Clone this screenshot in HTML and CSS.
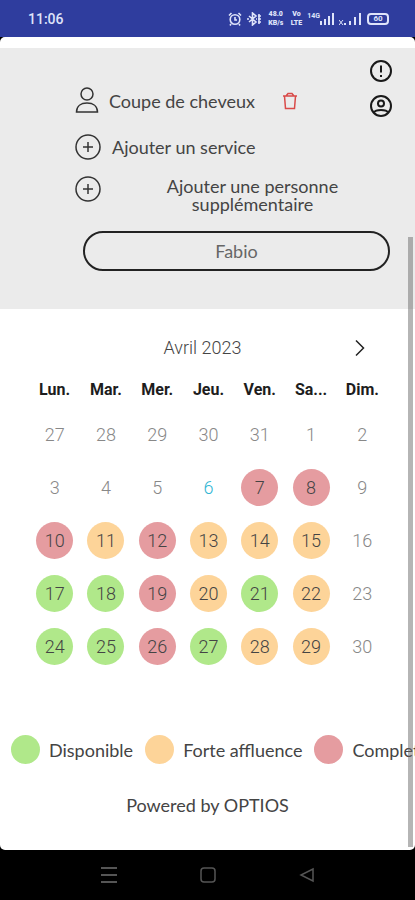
FILE: index.html
```html
<!DOCTYPE html>
<html lang="fr">
<head>
<meta charset="utf-8">
<meta name="viewport" content="width=device-width, initial-scale=1">
<title>Rendez-vous</title>
<link rel="stylesheet" href="styles.css">
</head>
<body>
<header class="status">
  <time class="clock">11:06</time>
  <div class="indicators">
    <svg width="14" height="14" viewBox="0 0 14 14" fill="none" stroke="currentColor" stroke-width="1.6"><circle cx="7" cy="7.5" r="4.8"/><path d="M7 5v3h2M1 3.5L3.5 1M10.500 1L13 3.500M3 12l-1 1.500M11 12l1 1.500"/></svg>
    <svg width="14" height="14" viewBox="0 0 14 14" fill="none" stroke="currentColor" stroke-width="1.600"><path d="M2 4l7 6-3.500 3V1L9 4l-7 6M0 7h2M9 7h1M12 2v10" /><path d="M11 4h3M11 7h3M11 10h3"/></svg>
    <span class="micro speed"><b>48.0</b><b>KB/s</b></span>
    <span class="micro"><b>Vo</b><b>LTE</b></span>
    <span class="signal"><b class="micro">14G</b><svg width="14" height="14" viewBox="0 0 14 14" fill="currentColor"><path d="M0 9h2v4H0zM4 7h2v6H4zM8 4h2v9H8zM12 1h2v12h-2z"/></svg></span>
    <svg width="23" height="14" viewBox="0 0 23 14" fill="currentColor"><path d="M5 11h2v2H5zM10 9h2v4h-2zM15 5h2v8h-2zM20 1h2v12h-2z"/><path d="M0 8l4 5M4 8l-4 5" stroke="currentColor"/></svg>
    <span class="battery">60</span>
  </div>
</header>
<main class="screen">
  <section class="booking">
    <div class="booking-top">
      <ul class="services">
        <li class="service">
          <svg class="person" width="24" height="26" viewBox="0 0 24 26" fill="none" stroke="currentColor" stroke-width="1.500"><circle cx="12" cy="7" r="6"/><path d="M1.500 25C1.500 19 6 16 12 16s10.500 3 10.500 9z"/></svg>
          <span>Coupe de cheveux</span>
          <button class="icon-btn delete" aria-label="Supprimer"><svg width="14" height="18" viewBox="0 0 14 18" fill="none" stroke="currentColor" stroke-width="1.500"><path d="M0 4h14M1.500 4l1 12.500h9l1-12.500M3 4L5 1.500h4L11 4"/></svg></button>
        </li>
        <li><button class="service add"><svg width="26" height="26" viewBox="0 0 26 26" fill="none" stroke="currentColor" stroke-width="1.500"><circle cx="13" cy="13" r="12"/><path d="M13 8v10M8 13h10"/></svg><span>Ajouter un service</span></button></li>
        <li><button class="service add guest"><svg width="26" height="26" viewBox="0 0 26 26" fill="none" stroke="currentColor" stroke-width="1.500"><circle cx="13" cy="13" r="12"/><path d="M13 8v10M8 13h10"/></svg><span>Ajouter une personne supplémentaire</span></button></li>
      </ul>
      <nav class="tools">
        <button class="icon-btn" aria-label="Informations"><svg width="22" height="22" viewBox="0 0 22 22" fill="none" stroke="currentColor" stroke-width="2"><circle cx="11" cy="11" r="10"/><path d="M11 5.500v7M11 15v2"/></svg></button>
        <button class="icon-btn" aria-label="Compte"><svg width="22" height="22" viewBox="0 0 22 22" fill="none" stroke="currentColor" stroke-width="2"><circle cx="11" cy="11" r="10"/><circle cx="11" cy="8.500" r="3"/><path d="M4 17.500c1-2 3-2.500 7-2.500s6 .5 7 2.500"/></svg></button>
      </nav>
    </div>
    <button class="staff">Fabio</button>
  </section>
  <section class="calendar">
    <div class="month">
      <h1>Avril 2023</h1>
      <button class="icon-btn next" aria-label="Mois suivant"><svg width="10" height="18" viewBox="0 0 10 18" fill="none" stroke="currentColor" stroke-width="1.500"><path d="M1 1.500L8.500 9L1 16.500"/></svg></button>
    </div>
    <table>
      <thead><tr><th>Lun.</th><th>Mar.</th><th>Mer.</th><th>Jeu.</th><th>Ven.</th><th>Sa...</th><th>Dim.</th></tr></thead>
      <tbody>
        <tr><td>27</td><td>28</td><td>29</td><td>30</td><td>31</td><td>1</td><td>2</td></tr>
        <tr><td>3</td><td>4</td><td>5</td><td class="today">6</td><td><button class="day full">7</button></td><td><button class="day full">8</button></td><td>9</td></tr>
        <tr><td><button class="day full">10</button></td><td><button class="day busy">11</button></td><td><button class="day full">12</button></td><td><button class="day busy">13</button></td><td><button class="day busy">14</button></td><td><button class="day busy">15</button></td><td>16</td></tr>
        <tr><td><button class="day free">17</button></td><td><button class="day free">18</button></td><td><button class="day full">19</button></td><td><button class="day busy">20</button></td><td><button class="day free">21</button></td><td><button class="day busy">22</button></td><td>23</td></tr>
        <tr><td><button class="day free">24</button></td><td><button class="day free">25</button></td><td><button class="day full">26</button></td><td><button class="day free">27</button></td><td><button class="day busy">28</button></td><td><button class="day busy">29</button></td><td>30</td></tr>
      </tbody>
    </table>
  </section>
  <ul class="legend">
    <li><i class="dot free"></i>Disponible</li>
    <li><i class="dot busy"></i>Forte affluence</li>
    <li><i class="dot full"></i>Complet</li>
  </ul>
  <p class="powered">Powered by OPTIOS</p>
  <div class="scrollbar"></div>
</main>
<nav class="system">
  <button class="icon-btn" aria-label="Menu"><svg width="16" height="18" viewBox="0 0 16 18" stroke="currentColor" stroke-width="2"><path d="M0 2h16M0 9h16M0 16h16"/></svg></button>
  <button class="icon-btn" aria-label="Accueil"><svg width="16" height="16" viewBox="0 0 16 16" fill="none" stroke="currentColor" stroke-width="1.500"><rect x="1" y="1" width="14" height="14" rx="3"/></svg></button>
  <button class="icon-btn" aria-label="Retour"><svg width="16" height="16" viewBox="0 0 16 16" fill="none" stroke="currentColor" stroke-width="1.500"><path d="M14 2v12L2 8z"/></svg></button>
</nav>
</body>
</html>
```
FILE: styles.css
```css
* { box-sizing: border-box; }
body {
  margin: 0;
  min-height: 100vh;
  display: flex;
  flex-direction: column;
  background: #000;
  color: #444;
  font: 18px/24px Lato, "Liberation Sans", sans-serif;
}
button { font: inherit; color: inherit; background: none; border: 0; padding: 0; cursor: pointer; }
ul { list-style: none; margin: 0; padding: 0; }
svg { display: block; flex: none; }
.icon-btn { display: grid; place-items: center; }

.status {
  height: 37px;
  padding: 0 26px 0 28px;
  display: flex;
  align-items: center;
  justify-content: space-between;
  background: #2f3d9e;
  color: #dfe4fa;
}
.clock { font: 500 14px/20px Roboto, sans-serif; }
.indicators { display: flex; align-items: center; gap: 5px; }
.micro { font: 700 7px/9px Roboto, sans-serif; }
.micro b { display: block; text-align: center; }
.speed { width: 20px; }
.signal { display: flex; align-items: flex-start; }
.battery {
  width: 22px;
  height: 12px;
  border: 2px solid;
  border-radius: 4px;
  font: 700 8px/8px Roboto, sans-serif;
  text-align: center;
}

.screen {
  flex: 1;
  position: relative;
  overflow: hidden;
  padding-top: 11px;
  background: #fff;
  border-radius: 5px;
}
.booking { background: #ebebeb; padding: 12px 23px 38px 75px; }
.booking-top { display: flex; align-items: flex-start; }
.services { flex: 1; padding-top: 27px; }
.service { display: flex; align-items: center; gap: 10px; line-height: 18px; width: 100%; }
.service svg { color: #333; }
.service.add { margin-top: 19px; gap: 11px; }
.service.guest { margin-top: 16px; align-items: flex-start; }
.guest span { flex: 1; padding: 1px 12px 1px 35px; text-align: center; }
.delete { margin-left: 18px; }
.service .delete svg { color: #d94a48; }
.person { margin-bottom: 2px; }
.tools { display: grid; gap: 13px; color: #191919; }
.staff {
  display: block;
  width: calc(100% - 10px);
  height: 40px;
  margin: 17px 2px 0 8px;
  border: 2px solid #222;
  border-radius: 20px;
  color: #666;
}

.calendar { padding: 27px 27px 0 29px; font-family: Roboto, "Liberation Sans", sans-serif; }
.month { display: grid; grid-template-columns: 1fr auto 1fr; align-items: center; }
.month h1 { grid-column: 2; margin: 0 0 0 -12px; font-size: 18px; font-weight: 300; line-height: 24px; }
.next { justify-self: end; margin-right: 23px; color: #222; }
.calendar table { width: 100%; table-layout: fixed; border-collapse: collapse; }
th { height: 48px; padding: 12px 0 0; font-size: 16px; line-height: 24px; font-weight: 700; color: #1d1d1d; }
td { height: 53px; padding: 0; text-align: center; font-weight: 300; color: #888; }
.today { color: #31b6d4; }
.day { width: 37px; height: 37px; border-radius: 50%; color: #444; font-weight: 300; vertical-align: middle; }
.free { background: #b0e88a; }
.busy { background: #fdd499; }
.full { background: #e59ca0; }

.legend { display: flex; gap: 12px; padding: 62px 0 0 11px; white-space: nowrap; }
.legend li { display: flex; align-items: center; gap: 9px; flex: none; }
.dot { width: 29px; height: 29px; border-radius: 50%; }
.powered { margin: 29px 0 0; text-align: center; }
.scrollbar {
  position: absolute;
  top: 200px;
  right: 2px;
  bottom: 3px;
  width: 5px;
  background: rgba(100, 100, 100, .48);
}

.system {
  height: 50px;
  display: flex;
  align-items: center;
  justify-content: center;
  gap: 83px;
  background: #000;
  color: #555;
}
```
